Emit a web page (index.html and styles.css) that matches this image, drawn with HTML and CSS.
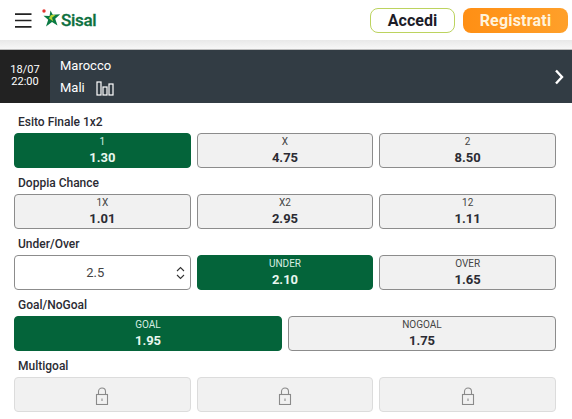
FILE: index.html
```html
<!DOCTYPE html>
<html lang="it">
<head>
<meta charset="utf-8">
<title>Sisal</title>
<link rel="stylesheet" href="styles.css">
</head>
<body>
<header class="topbar">
  <div class="brand">
    <svg class="burger" width="17" height="15" viewBox="0 0 17 15"><path d="M0 1.200h16.500M0 7.500h16.500M0 13.800h16.500" stroke="#222" stroke-width="1.700" fill="none"/></svg>
    <div class="logo">
      <svg class="logo-star" width="19" height="19" viewBox="0 0 19 19">
        <circle cx="2" cy="2" r="1.700" fill="#e3342f"/>
        <path d="M8.500 1.500l2.300 4.300 7.400-.6-5 4.600 2.300 6.700-5.500-3.500-6 4.500 2.200-6.800L1.500 6.800l6 .2z" fill="#0b7a43"/>
        <path d="M9 6l4.800-.3-3.800 3.100 1.100 3.500-4.200-3.100z" fill="#b6d432"/>
      </svg>
      <span class="logo-text">Sisal</span>
    </div>
  </div>
  <div class="actions">
    <a class="btn btn-login">Accedi</a>
    <a class="btn btn-register">Registrati</a>
  </div>
</header>
<div class="shadow"></div>
<section class="match">
  <div class="when"><span>18/07</span><span>22:00</span></div>
  <div class="teams">
    <div class="team">Marocco</div>
    <div class="team">Mali
      <svg class="stats" width="18" height="15" viewBox="0 0 18 15"><g fill="none" stroke="#fff" stroke-width="1.200"><rect x="1" y="1" width="4" height="13"/><rect x="7" y="6" width="4" height="8"/><rect x="13" y="3" width="4" height="11"/></g></svg>
    </div>
  </div>
  <svg class="chevron" width="11" height="16" viewBox="0 0 11 16"><path d="M2 1.500l6 6.500-6 6.500" fill="none" stroke="#fff" stroke-width="2.400"/></svg>
</section>
<main class="markets">
  <section class="market">
    <h2>Esito Finale 1x2</h2>
    <div class="odds three">
      <button class="odd on"><small>1</small><b>1.30</b></button>
      <button class="odd"><small>X</small><b>4.75</b></button>
      <button class="odd"><small>2</small><b>8.50</b></button>
    </div>
  </section>
  <section class="market">
    <h2>Doppia Chance</h2>
    <div class="odds three">
      <button class="odd"><small>1X</small><b>1.01</b></button>
      <button class="odd"><small>X2</small><b>2.95</b></button>
      <button class="odd"><small>12</small><b>1.11</b></button>
    </div>
  </section>
  <section class="market">
    <h2>Under/Over</h2>
    <div class="odds three">
      <div class="select">
        <span>2.5</span>
        <svg class="updown" width="9" height="14" viewBox="0 0 9 14"><path d="M1 5l3.500-3.500L8 5M1 9l3.500 3.500L8 9" fill="none" stroke="#333" stroke-width="1.100"/></svg>
      </div>
      <button class="odd on"><small>UNDER</small><b>2.10</b></button>
      <button class="odd"><small>OVER</small><b>1.65</b></button>
    </div>
  </section>
  <section class="market">
    <h2>Goal/NoGoal</h2>
    <div class="odds two">
      <button class="odd on"><small>GOAL</small><b>1.95</b></button>
      <button class="odd"><small>NOGOAL</small><b>1.75</b></button>
    </div>
  </section>
  <section class="market">
    <h2>Multigoal</h2>
    <div class="odds three">
      <div class="odd locked"><svg width="14" height="18" viewBox="0 0 14 18"><g fill="none" stroke="#8a8a8a" stroke-width="1.100"><rect x="1.500" y="7.500" width="11" height="10"/><path d="M3.500 7.500V4.500a3.500 3.500 0 0 1 7 0v3"/><path d="M7 11.500v2.500"/></g></svg></div>
      <div class="odd locked"><svg width="14" height="18" viewBox="0 0 14 18"><g fill="none" stroke="#8a8a8a" stroke-width="1.100"><rect x="1.500" y="7.500" width="11" height="10"/><path d="M3.500 7.500V4.500a3.500 3.500 0 0 1 7 0v3"/><path d="M7 11.500v2.500"/></g></svg></div>
      <div class="odd locked"><svg width="14" height="18" viewBox="0 0 14 18"><g fill="none" stroke="#8a8a8a" stroke-width="1.100"><rect x="1.500" y="7.500" width="11" height="10"/><path d="M3.500 7.500V4.500a3.500 3.500 0 0 1 7 0v3"/><path d="M7 11.500v2.500"/></g></svg></div>
    </div>
  </section>
</main>
</body>
</html>
```
FILE: styles.css
```css
* { box-sizing: border-box; }
html, body { margin: 0; padding: 0; }
body {
  width: 572px;
  height: 419px;
  overflow: hidden;
  background: #fff;
  font-family: Roboto, "Liberation Sans", sans-serif;
  color: #222;
}
.topbar {
  height: 40px;
  padding: 7px 4px 7px 15px;
  display: flex;
  align-items: center;
  justify-content: space-between;
}
.brand { display: flex; align-items: center; gap: 10px; }
.burger { display: block; }
.logo { display: flex; align-items: center; height: 20px; }
.logo-star { display: block; margin-top: -3px; }
.logo-text {
  font-size: 17px;
  font-weight: 500;
  color: #0d7040;
  letter-spacing: -0.3px;
  -webkit-text-stroke: 0.3px #0d7040;
}
.actions { display: flex; gap: 8px; }
.btn {
  display: flex;
  align-items: center;
  justify-content: center;
  height: 25px;
  border-radius: 8px;
  font-size: 16px;
  font-weight: 700;
}
.btn-login {
  width: 85px;
  border: 1px solid #bcd35f;
  color: #1c1c28;
}
.btn-register {
  width: 105px;
  background: linear-gradient(90deg, #ff8f14, #ffa02a);
  color: #fff3dc;
  letter-spacing: 0.2px;
}
.shadow {
  height: 10px;
  background: linear-gradient(#e9e9e9, #f7f7f7);
  border-bottom: 1px solid #bdbdbd;
}
.match {
  height: 53px;
  display: flex;
  align-items: stretch;
  background: #323c44;
  color: #fff;
}
.when {
  width: 50px;
  background: #222;
  display: flex;
  flex-direction: column;
  align-items: center;
  justify-content: center;
  font-size: 11px;
  line-height: 12px;
  padding-bottom: 2px;
}
.teams {
  flex: 1;
  padding: 5px 0 0 10px;
  font-size: 13px;
  line-height: 22px;
}
.team { display: flex; align-items: center; gap: 11px; }
.stats { display: block; margin-top: 1px; }
.chevron { align-self: center; margin-right: 7px; }
.markets { padding: 8px 16px 0 14px; }
.market { margin-bottom: 4px; }
.market h2 {
  margin: 0;
  padding-left: 4px;
  font-size: 12px;
  line-height: 22px;
  font-weight: 500;
  color: #2b2b33;
}
.odds { display: grid; gap: 6px; height: 35px; }
.three { grid-template-columns: 1fr 1fr 1fr; }
.two { grid-template-columns: 1fr 1fr; }
.odd {
  margin: 0;
  padding: 0;
  display: flex;
  flex-direction: column;
  align-items: center;
  justify-content: center;
  background: #f1f1f1;
  border: 1px solid #8c8c8c;
  border-radius: 4px;
  color: #2b2b33;
  font-family: inherit;
}
.odd small {
  font-size: 10px;
  line-height: 14px;
  font-weight: 400;
  color: #444;
}
.odd b {
  font-size: 13px;
  line-height: 17px;
  font-weight: 700;
}
.odd.on {
  background: #04643a;
  border-color: #04643a;
  color: #e9f7ef;
}
.odd.on small { color: #d8eee2; }
.odd.locked {
  border-color: #dcdcdc;
  padding: 2px 0 0;
}
.select {
  position: relative;
  display: flex;
  align-items: center;
  justify-content: center;
  border: 1px solid #8c8c8c;
  border-radius: 4px;
  background: #fff;
  font-size: 13px;
  color: #444;
  padding-right: 14px;
}
.updown { position: absolute; right: 5px; top: 10px; }
```
